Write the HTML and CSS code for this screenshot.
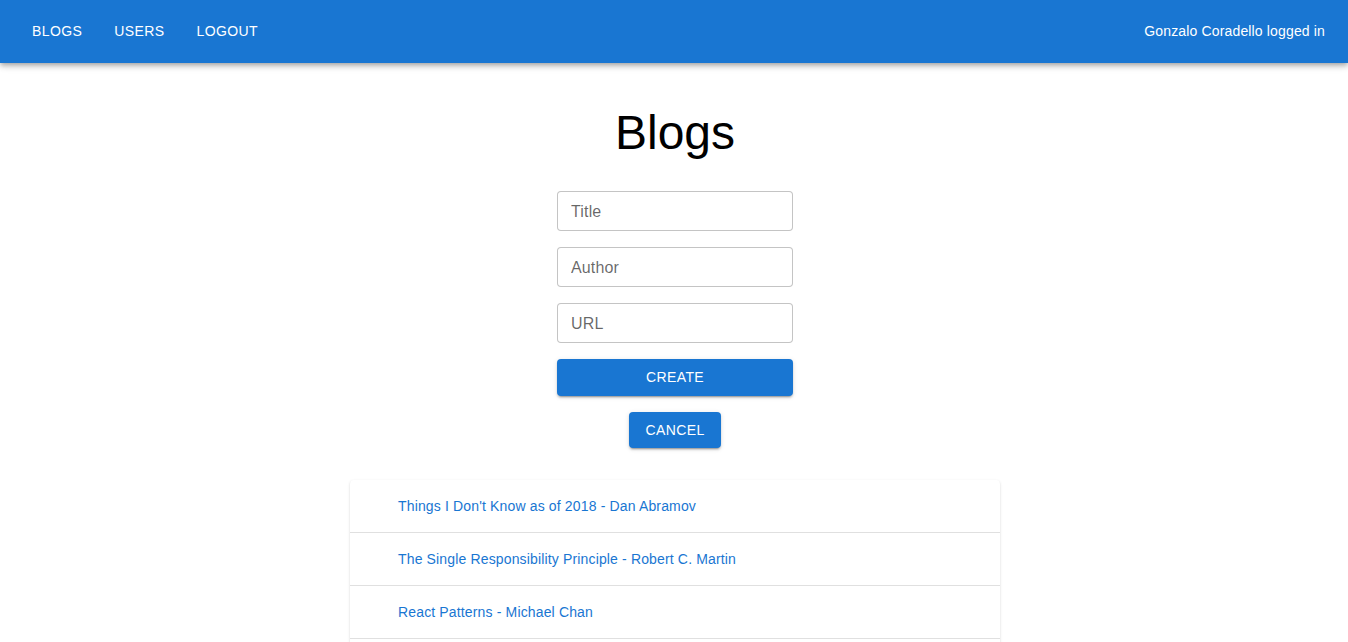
FILE: index.html
```html
<!DOCTYPE html>
<html lang="en">
<head>
<meta charset="utf-8">
<title>Blogs</title>
<link rel="stylesheet" href="styles.css">
</head>
<body>
<header class="appbar">
  <nav class="nav">
    <a class="nav-btn" href="#">Blogs</a>
    <a class="nav-btn" href="#">Users</a>
    <a class="nav-btn" href="#">Logout</a>
  </nav>
  <span class="user">Gonzalo Coradello logged in</span>
</header>
<main class="main">
  <h1 class="title">Blogs</h1>
  <form class="form">
    <input class="field" type="text" placeholder="Title">
    <input class="field" type="text" placeholder="Author">
    <input class="field" type="text" placeholder="URL">
    <button class="btn btn-full" type="button">Create</button>
    <button class="btn btn-cancel" type="button">Cancel</button>
  </form>
  <ul class="list">
    <li class="item"><a href="#">Things I Don't Know as of 2018 - Dan Abramov</a></li>
    <li class="item"><a href="#">The Single Responsibility Principle - Robert C. Martin</a></li>
    <li class="item"><a href="#">React Patterns - Michael Chan</a></li>
    <li class="item"><a href="#">Go To Statement Considered Harmful - Edsger W. Dijkstra</a></li>
    <li class="item"><a href="#">First class tests - Robert C. Martin</a></li>
  </ul>
</main>
</body>
</html>
```
FILE: styles.css
```css
* { box-sizing: border-box; }
body {
  margin: 0;
  font-family: "Liberation Sans", Arial, sans-serif;
  background: #fff;
  color: rgba(0,0,0,0.87);
}
.appbar {
  height: 63px;
  background: #1976d2;
  color: #fff;
  display: flex;
  align-items: center;
  justify-content: space-between;
  padding: 0 23px 2px 24px;
  box-shadow: 0px 2px 4px -1px rgba(0,0,0,0.2), 0px 4px 5px 0px rgba(0,0,0,0.14), 0px 1px 10px 0px rgba(0,0,0,0.12);
  position: relative;
  z-index: 2;
}
.nav { display: flex; gap: 16px; }
.nav-btn {
  color: #fff;
  text-decoration: none;
  text-transform: uppercase;
  font-size: 14px;
  letter-spacing: 0.02857em;
  padding: 6px 8px;
  line-height: 24px;
}
.user {
  font-size: 14px;
  line-height: 24px;
  letter-spacing: 0.01071em;
}
.main {
  display: flex;
  flex-direction: column;
  align-items: center;
  padding-left: 2px;
}
.title {
  font-size: 48px;
  font-weight: 400;
  line-height: 56px;
  margin: 42px 0 30px;
  color: #000;
}
.form {
  width: 236px;
  display: flex;
  flex-direction: column;
  align-items: center;
  gap: 16px;
}
.field {
  width: 100%;
  height: 40px;
  border: 1px solid rgba(0,0,0,0.23);
  border-radius: 4px;
  padding: 1px 13px 0;
  font-family: inherit;
  font-size: 16px;
  letter-spacing: 0.00938em;
  color: rgba(0,0,0,0.87);
  outline: none;
}
.field::placeholder { color: rgba(0,0,0,0.6); opacity: 1; }
.btn {
  background: #1976d2;
  color: #fff;
  border: 0;
  border-radius: 4px;
  font-family: inherit;
  font-size: 14px;
  text-transform: uppercase;
  letter-spacing: 0.02857em;
  line-height: 24.5px;
  padding: 6px 16px;
  box-shadow: 0px 3px 1px -2px rgba(0,0,0,0.2), 0px 2px 2px 0px rgba(0,0,0,0.14), 0px 1px 5px 0px rgba(0,0,0,0.12);
  cursor: pointer;
}
.btn-full { width: 100%; }
.list {
  list-style: none;
  margin: 32px 0 0;
  padding: 0;
  width: 650px;
  border-radius: 4px;
  background: #fff;
  box-shadow: 0px 2px 1px -1px rgba(0,0,0,0.2), 0px 1px 1px 0px rgba(0,0,0,0.14), 0px 1px 3px 0px rgba(0,0,0,0.12);
}
.item {
  height: 53px;
  display: flex;
  align-items: center;
  padding-left: 48px;
  border-bottom: 1px solid rgba(0,0,0,0.12);
  font-size: 14px;
  letter-spacing: 0.01071em;
}
.item a {
  color: #1976d2;
  text-decoration: none;
}
```
